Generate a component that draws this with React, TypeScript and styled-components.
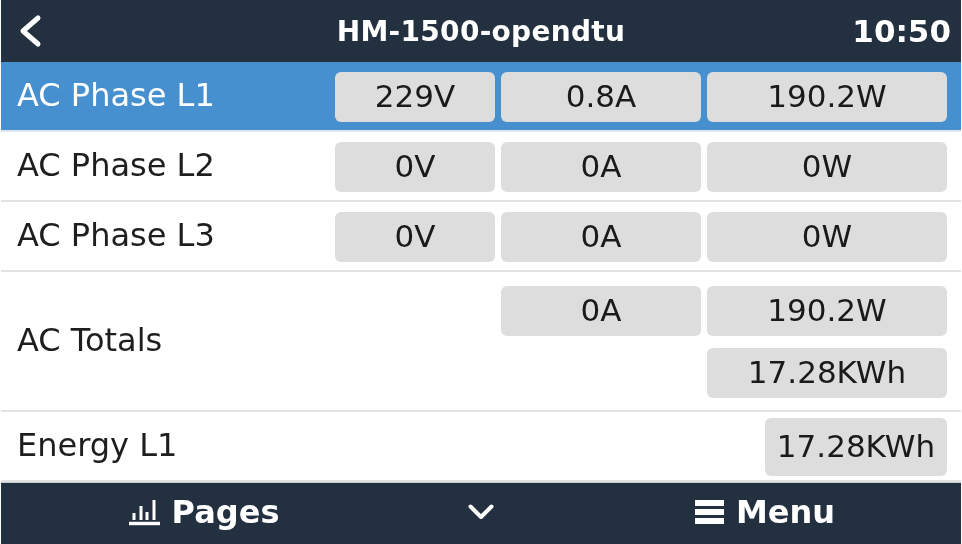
import React from 'react';
import styled, { createGlobalStyle } from 'styled-components';

const GlobalStyle = createGlobalStyle`
  html, body {
    margin: 0;
    padding: 0;
    background: #fff;
  }
`;

const Screen = styled.div`
  width: 960px;
  height: 544px;
  margin-left: 1px;
  display: flex;
  flex-direction: column;
  overflow: hidden;
  font-family: 'DejaVu Sans', sans-serif;
  filter: blur(0.6px);
`;

const Bar = styled.div`
  background: #22303f;
  color: #fff;
  font-weight: 700;
  flex: none;
`;

const Header = styled(Bar)`
  height: 62px;
  display: grid;
  grid-template-columns: 200px 1fr 200px;
  align-items: center;
  box-sizing: border-box;
`;

const BackIcon = styled.svg`
  width: 24px;
  height: 34px;
  margin-left: 17px;
`;

const Title = styled.div`
  text-align: center;
  font-size: 28px;
  letter-spacing: 0.3px;
`;

const Clock = styled.div`
  text-align: right;
  padding-right: 10px;
  font-size: 31px;
`;

const List = styled.div`
  flex: 1;
  display: flex;
  flex-direction: column;
`;

const Row = styled.div<{ $active?: boolean; $height: number }>`
  height: ${p => p.$height}px;
  flex: none;
  box-sizing: border-box;
  display: flex;
  align-items: center;
  justify-content: space-between;
  padding: 2px 14px 0 16px;
  background: ${p => (p.$active ? '#4790d0' : '#fff')};
  color: ${p => (p.$active ? '#fff' : '#1e1e1e')};
  border-bottom: 2px solid ${p => (p.$active ? '#dfe8f0' : '#e2e2e2')};
`;

const Label = styled.div`
  font-size: 32px;
  margin-top: -4px;
`;

const Values = styled.div`
  display: flex;
  gap: 6px;
`;

const Stack = styled.div`
  display: flex;
  flex-direction: column;
  align-items: flex-end;
  gap: 12px;
`;

const Pill = styled.div<{ $width: number; $height?: number }>`
  width: ${p => p.$width}px;
  height: ${p => p.$height ?? 50}px;
  box-sizing: border-box;
  padding-bottom: 2px;
  display: flex;
  align-items: center;
  justify-content: center;
  background: #dddddd;
  border-radius: 6px;
  color: #1a1a1a;
  font-size: 31px;
`;

const Footer = styled(Bar)`
  height: 62px;
  display: grid;
  grid-template-columns: 1fr 1fr 1fr;
  align-items: center;
  font-size: 32px;
  border-top: 1px solid #c8ccd0;
  box-sizing: border-box;
  padding-bottom: 3px;
`;

const FooterItem = styled.div<{ $left?: number; $right?: number }>`
  display: flex;
  align-items: center;
  justify-content: center;
  gap: 12px;
  padding: 0 ${p => p.$right ?? 0}px 0 ${p => p.$left ?? 0}px;
`;

const PhaseRow = ({ name, v, a, w, active }: { name: string; v: string; a: string; w: string; active?: boolean }) => (
  <Row $active={active} $height={70}>
    <Label>{name}</Label>
    <Values>
      <Pill $width={160}>{v}</Pill>
      <Pill $width={200}>{a}</Pill>
      <Pill $width={240}>{w}</Pill>
    </Values>
  </Row>
);

export default function App() {
  return (
    <>
      <GlobalStyle />
      <Screen>
        <Header>
          <BackIcon viewBox="0 0 24 34">
            <path d="M20 4 L5 17 L20 30" fill="none" stroke="#fff" strokeWidth="5" strokeLinecap="round" strokeLinejoin="round" />
          </BackIcon>
          <Title>HM-1500-opendtu</Title>
          <Clock>10:50</Clock>
        </Header>
        <List>
          <PhaseRow active name="AC Phase L1" v="229V" a="0.8A" w="190.2W" />
          <PhaseRow name="AC Phase L2" v="0V" a="0A" w="0W" />
          <PhaseRow name="AC Phase L3" v="0V" a="0A" w="0W" />
          <Row $height={140}>
            <Label>AC Totals</Label>
            <Stack>
              <Values>
                <Pill $width={200}>0A</Pill>
                <Pill $width={240}>190.2W</Pill>
              </Values>
              <Pill $width={240}>17.28KWh</Pill>
            </Stack>
          </Row>
          <Row $height={70}>
            <Label>Energy L1</Label>
            <Pill $width={182} $height={58}>17.28KWh</Pill>
          </Row>
        </List>
        <Footer>
          <FooterItem $left={86}>
            <svg width="31" height="27" viewBox="0 0 31 27">
              <path d="M0 24.5H31" stroke="#fff" strokeWidth="3.4" />
              <path d="M5 14V21M12 7V21M18 13V21M25 1V21" stroke="#fff" strokeWidth="3" fill="none" />
            </svg>
            <span>Pages</span>
          </FooterItem>
          <FooterItem>
            <svg width="26" height="16" viewBox="0 0 26 16">
              <path d="M2.5 2.5 L13 13 L23.5 2.5" fill="none" stroke="#fff" strokeWidth="4" strokeLinecap="round" strokeLinejoin="round" />
            </svg>
          </FooterItem>
          <FooterItem $right={72}>
            <svg width="29" height="24" viewBox="0 0 29 24">
              <path d="M0 3H29M0 12H29M0 21H29" stroke="#fff" strokeWidth="6" />
            </svg>
            <span>Menu</span>
          </FooterItem>
        </Footer>
      </Screen>
    </>
  );
}
